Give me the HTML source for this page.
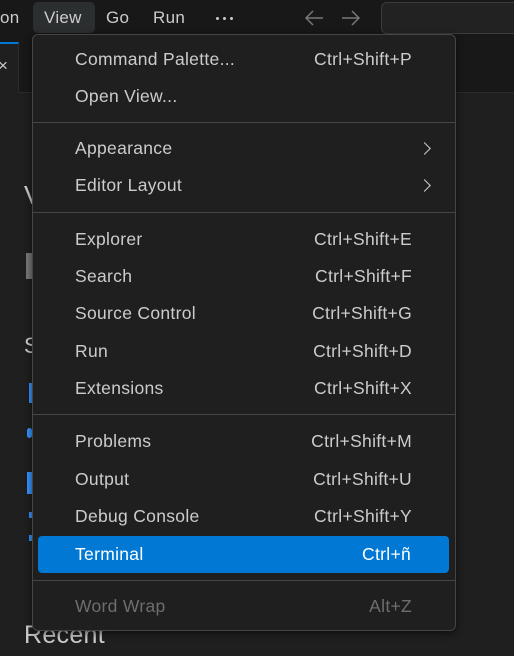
<!DOCTYPE html>
<html><head><meta charset="utf-8"><style>
*{margin:0;padding:0;box-sizing:border-box}
body{width:514px;height:656px;background:#1f1f1f;font-family:"Segoe UI","Liberation Sans",sans-serif;color:#ccc;position:relative;overflow:hidden}
.tb{position:absolute;left:0;top:0;width:514px;height:42px;background:#181818}
.tm{position:absolute;top:8px;font-size:17px;color:#ccc;letter-spacing:0.3px}
.tabs{position:absolute;left:0;top:42px;width:514px;height:51px;background:#181818;border-bottom:1px solid #2b2b2b}
.tab{position:absolute;left:0;top:0;width:19px;height:51px;background:#1f1f1f;border-top:2px solid #0078d4;border-right:1px solid #2b2b2b}
.menu{position:absolute;left:32px;top:34px;width:424px;height:597px;background:#1f1f1f;border:1px solid #454545;border-radius:6px;box-shadow:0 2px 8px rgba(0,0,0,.6)}
.it{position:absolute;left:0;width:422px;height:37px;font-size:17.5px;line-height:37px;letter-spacing:0.3px}
.it .l{position:absolute;left:42px}
.it .r{position:absolute;right:43px}
.sep{position:absolute;left:0;width:422px;height:1px;background:#454545}
.hl{background:#0078d4;color:#fff;left:5px;width:411px;border-radius:4px}
.hl .l{left:37px}.hl .r{right:38px}
.dis{color:#6e6e6e}
.chev{position:absolute;right:26px;top:14px;width:9px;height:9px;border-right:1.5px solid #ccc;border-top:1.5px solid #ccc;transform:rotate(45deg)}
.dot{position:absolute;top:17px;width:3px;height:3px;border-radius:50%;background:#ccc}
</style></head><body>
<div class="tb"></div>
<div class="tm" style="left:0">on</div>
<div style="position:absolute;left:33px;top:2px;width:62px;height:31px;background:#2c2f30;border-radius:5px"></div>
<div class="tm" style="left:44px">View</div>
<div class="tm" style="left:106px">Go</div>
<div class="tm" style="left:153px">Run</div>
<div class="dot" style="left:216px"></div><div class="dot" style="left:223px"></div><div class="dot" style="left:230px"></div>
<svg style="position:absolute;left:303px;top:8px" width="22" height="20" viewBox="0 0 22 20" fill="none" stroke="#777" stroke-width="1.5"><path d="M20 10H3M10 3L3 10L10 17"/></svg>
<svg style="position:absolute;left:340px;top:8px" width="22" height="20" viewBox="0 0 22 20" fill="none" stroke="#777" stroke-width="1.5"><path d="M2 10H19M12 3L19 10L12 17"/></svg>
<div style="position:absolute;left:381px;top:2px;width:140px;height:32px;border:1px solid #3c3c3c;border-radius:6px;background:#222"></div>
<div class="tabs"><div class="tab"></div><div style="position:absolute;left:-2px;top:14px;color:#ccc;font-size:17px">×</div></div>
<div style="position:absolute;left:24px;top:180px;font-size:26px;color:#ccc">V</div>
<div style="position:absolute;left:26px;top:253px;width:6px;height:26px;background:#777"></div>
<div style="position:absolute;left:24px;top:333px;font-size:22px;color:#ccc">S</div>
<div style="position:absolute;left:29px;top:383px;width:3px;height:20px;background:#3794ff"></div>
<div style="position:absolute;left:27px;top:428px;width:5px;height:10px;background:#3794ff;border-radius:3px"></div>
<div style="position:absolute;left:27px;top:472px;width:5px;height:22px;background:#3794ff"></div>
<div style="position:absolute;left:29px;top:512px;width:3px;height:6px;background:#3794ff"></div>
<div style="position:absolute;left:29px;top:535px;width:3px;height:6px;background:#3794ff"></div>
<div style="position:absolute;left:24px;top:621px;font-size:25px;color:#ccc;letter-spacing:0.3px">Recent</div>
<div class="menu">
<div class="it" style="top:6px"><span class="l">Command Palette...</span><span class="r">Ctrl+Shift+P</span></div>
<div class="it" style="top:43px"><span class="l">Open View...</span></div>
<div class="sep" style="top:87px"></div>
<div class="it" style="top:95px"><span class="l">Appearance</span><span class="chev"></span></div>
<div class="it" style="top:132px"><span class="l">Editor Layout</span><span class="chev"></span></div>
<div class="sep" style="top:177px"></div>
<div class="it" style="top:186px"><span class="l">Explorer</span><span class="r">Ctrl+Shift+E</span></div>
<div class="it" style="top:223px"><span class="l">Search</span><span class="r">Ctrl+Shift+F</span></div>
<div class="it" style="top:260px"><span class="l">Source Control</span><span class="r">Ctrl+Shift+G</span></div>
<div class="it" style="top:298px"><span class="l">Run</span><span class="r">Ctrl+Shift+D</span></div>
<div class="it" style="top:335px"><span class="l">Extensions</span><span class="r">Ctrl+Shift+X</span></div>
<div class="sep" style="top:379px"></div>
<div class="it" style="top:388px"><span class="l">Problems</span><span class="r">Ctrl+Shift+M</span></div>
<div class="it" style="top:426px"><span class="l">Output</span><span class="r">Ctrl+Shift+U</span></div>
<div class="it" style="top:463px"><span class="l">Debug Console</span><span class="r">Ctrl+Shift+Y</span></div>
<div class="it hl" style="top:501px"><span class="l">Terminal</span><span class="r">Ctrl+ñ</span></div>
<div class="sep" style="top:545px"></div>
<div class="it dis" style="top:553px"><span class="l">Word Wrap</span><span class="r">Alt+Z</span></div>
</div>
</body></html>
